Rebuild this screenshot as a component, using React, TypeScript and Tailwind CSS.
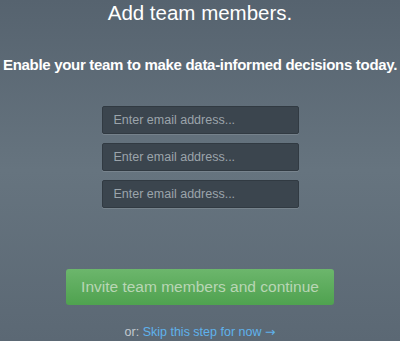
export default function App() {
  return (
    <div className="flex h-[341px] w-[400px] flex-col items-center overflow-hidden bg-[linear-gradient(180deg,#56636f_0%,#66747f_50%,#5b6874_100%)] font-['Liberation_Sans',Arial,sans-serif] text-white">
      <h1 className="mt-[1px] text-[20.5px] leading-[24px]">Add team members.</h1>
      <p className="mt-[31px] whitespace-nowrap text-[15px] font-bold leading-[18px] tracking-[-0.3px]">
        Enable your team to make data-informed decisions today.
      </p>
      <div className="mt-[32px] flex flex-col gap-[9px]">
        {[0, 1, 2].map((i) => (
          <input
            key={i}
            placeholder="Enter email address..."
            className="h-[28px] w-[197px] rounded-[2px] border border-[#313a42] bg-[#3b454e] px-[11px] text-[12.5px] text-white shadow-[0_1px_0_rgba(255,255,255,0.12)] outline-none placeholder:text-[#9ba4ab]"
          />
        ))}
      </div>
      <button className="mt-[61px] h-[36px] w-[268px] rounded-[3px] bg-[linear-gradient(180deg,#6cb66c,#4fa24f)] text-[15.5px] text-[#b9d6b5]">
        Invite team members and continue
      </button>
      <p className="mt-[20px] text-[12.5px] leading-[14px] text-[#c3cad0]">
        or:{" "}
        <span className="text-[#5fb2ec]">
          Skip this step for now <span className="font-['DejaVu_Sans']">→</span>
        </span>
      </p>
    </div>
  );
}
